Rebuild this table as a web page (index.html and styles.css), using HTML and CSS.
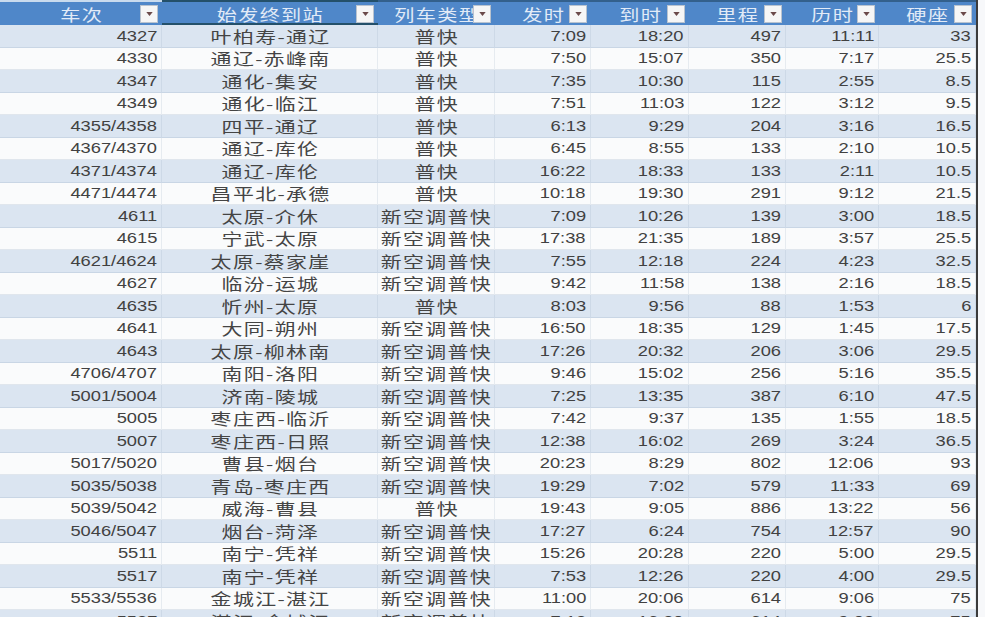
FILE: index.html
```html
<!DOCTYPE html>
<html lang="zh">
<head>
<meta charset="utf-8">
<title>列车时刻</title>
<link rel="stylesheet" href="styles.css">
</head>
<body>
<div class="sheet">
  <div class="row hdr">
    <div class="h first"><span class="ht">车次</span><span class="dd"><svg viewBox="0 0 8 5" width="7" height="4"><path d="M0 0H8L4 5Z"/></svg></span></div>
    <div class="h sel"><span class="ht">始发终到站</span><span class="dd"><svg viewBox="0 0 8 5" width="7" height="4"><path d="M0 0H8L4 5Z"/></svg></span></div>
    <div class="h"><span class="ht">列车类型</span><span class="dd"><svg viewBox="0 0 8 5" width="7" height="4"><path d="M0 0H8L4 5Z"/></svg></span></div>
    <div class="h"><span class="ht">发时</span><span class="dd"><svg viewBox="0 0 8 5" width="7" height="4"><path d="M0 0H8L4 5Z"/></svg></span></div>
    <div class="h"><span class="ht">到时</span><span class="dd"><svg viewBox="0 0 8 5" width="7" height="4"><path d="M0 0H8L4 5Z"/></svg></span></div>
    <div class="h"><span class="ht">里程</span><span class="dd"><svg viewBox="0 0 8 5" width="7" height="4"><path d="M0 0H8L4 5Z"/></svg></span></div>
    <div class="h"><span class="ht">历时</span><span class="dd"><svg viewBox="0 0 8 5" width="7" height="4"><path d="M0 0H8L4 5Z"/></svg></span></div>
    <div class="h"><span class="ht">硬座</span><span class="dd"><svg viewBox="0 0 8 5" width="7" height="4"><path d="M0 0H8L4 5Z"/></svg></span></div>
  </div>
  <div id="body"></div>
</div>
<script>
const data = [
["4327","叶柏寿-通辽","普快","7:09","18:20","497","11:11","33"],
["4330","通辽-赤峰南","普快","7:50","15:07","350","7:17","25.5"],
["4347","通化-集安","普快","7:35","10:30","115","2:55","8.5"],
["4349","通化-临江","普快","7:51","11:03","122","3:12","9.5"],
["4355/4358","四平-通辽","普快","6:13","9:29","204","3:16","16.5"],
["4367/4370","通辽-库伦","普快","6:45","8:55","133","2:10","10.5"],
["4371/4374","通辽-库伦","普快","16:22","18:33","133","2:11","10.5"],
["4471/4474","昌平北-承德","普快","10:18","19:30","291","9:12","21.5"],
["4611","太原-介休","新空调普快","7:09","10:26","139","3:00","18.5"],
["4615","宁武-太原","新空调普快","17:38","21:35","189","3:57","25.5"],
["4621/4624","太原-蔡家崖","新空调普快","7:55","12:18","224","4:23","32.5"],
["4627","临汾-运城","新空调普快","9:42","11:58","138","2:16","18.5"],
["4635","忻州-太原","普快","8:03","9:56","88","1:53","6"],
["4641","大同-朔州","新空调普快","16:50","18:35","129","1:45","17.5"],
["4643","太原-柳林南","新空调普快","17:26","20:32","206","3:06","29.5"],
["4706/4707","南阳-洛阳","新空调普快","9:46","15:02","256","5:16","35.5"],
["5001/5004","济南-陵城","新空调普快","7:25","13:35","387","6:10","47.5"],
["5005","枣庄西-临沂","新空调普快","7:42","9:37","135","1:55","18.5"],
["5007","枣庄西-日照","新空调普快","12:38","16:02","269","3:24","36.5"],
["5017/5020","曹县-烟台","新空调普快","20:23","8:29","802","12:06","93"],
["5035/5038","青岛-枣庄西","新空调普快","19:29","7:02","579","11:33","69"],
["5039/5042","威海-曹县","普快","19:43","9:05","886","13:22","56"],
["5046/5047","烟台-菏泽","新空调普快","17:27","6:24","754","12:57","90"],
["5511","南宁-凭祥","新空调普快","15:26","20:28","220","5:00","29.5"],
["5517","南宁-凭祥","新空调普快","7:53","12:26","220","4:00","29.5"],
["5533/5536","金城江-湛江","新空调普快","11:00","20:06","614","9:06","75"],
["5537","湛江-金城江","新空调普快","7:12","16:20","614","9:08","75"]
];
const body = document.getElementById("body");
data.forEach((r, i) => {
  const row = document.createElement("div");
  row.className = "row " + (i % 2 === 0 ? "band" : "plain");
  r.forEach((v, j) => {
    const c = document.createElement("div");
    const zh = (j === 1 || j === 2);
    c.className = "c " + (zh ? "cz" : "cn");
    const s = document.createElement("span");
    s.className = zh ? "tz" : "tn";
    s.textContent = v;
    c.appendChild(s);
    row.appendChild(c);
  });
  body.appendChild(row);
});
</script>
</body>
</html>
```

FILE: styles.css
```css
html, body {
  margin: 0;
  padding: 0;
  background: #f7f8fa;
  overflow: hidden;
  height: 617px;
}
body {
  font-family: "Liberation Sans", "Noto Sans CJK SC", sans-serif;
  color: #3d3d3d;
}
.sheet {
  width: 976px;
  border-right: 2px solid #3b3b3b;
  padding-top: 2px;
  background: #fff;
}
.row {
  display: grid;
  grid-template-columns: 162px 216px 117px 96px 98px 97px 93px 97px;
  height: 22.5px;
}
.hdr {
  height: 23px;
  background: #4f87c9;
}
.h {
  position: relative;
  display: flex;
  align-items: center;
  justify-content: center;
  border-top: 2px solid #33608c;
  margin-top: -2px;
  height: 23px;
}
.h.first {
  border-top-color: #c9dbee;
}
.h.sel {
  box-shadow: inset 0 -2px 0 #24506a;
  border-top-color: #24506a;
}
.ht {
  display: inline-block;
  font-family: "Noto Sans CJK SC", sans-serif;
  font-size: 15.5px;
  line-height: 20px;
  letter-spacing: 1px;
  padding-left: 1px;
  transform: scaleX(1.3);
  color: #e2ebf7;
  white-space: nowrap;
}
.dd {
  position: absolute;
  right: 4px;
  top: 3px;
  width: 16px;
  height: 16px;
  background: #f6f6f6;
  border: 1px solid #b9c3cf;
  display: flex;
  align-items: center;
  justify-content: center;
}
.dd svg {
  fill: #6b4a4a;
}
.band {
  background: #dbe5f1;
}
.plain {
  background: #fafbfc;
}
.c {
  display: flex;
  align-items: center;
  border-right: 1px solid rgba(140, 160, 185, 0.18);
  border-bottom: 1px solid rgba(150, 170, 195, 0.25);
  white-space: nowrap;
}
.cn {
  justify-content: flex-end;
  padding-right: 4px;
}
.tn {
  display: inline-block;
  font-size: 15px;
  line-height: 18px;
  transform: scaleX(1.22);
  transform-origin: right center;
  color: #414141;
}
.cz {
  justify-content: center;
}
.tz {
  display: inline-block;
  font-family: "Noto Sans CJK SC", sans-serif;
  font-size: 15.5px;
  line-height: 20px;
  letter-spacing: 1px;
  padding-left: 1px;
  transform: scaleX(1.35);
  color: #444;
}
```
